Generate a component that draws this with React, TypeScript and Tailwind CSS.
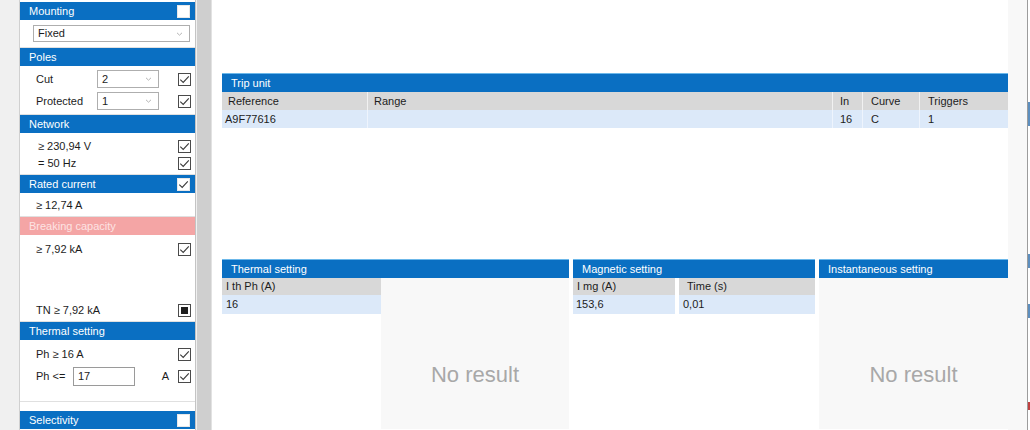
import React from "react"

type BoxState = "on" | "off" | "mixed"

function Box({ state, header = false }: { state: BoxState; header?: boolean }) {
  return (
    <span
      className={`flex h-[13px] w-[13px] shrink-0 items-center justify-center bg-white ${
        header ? "border border-[#e8e8e8]" : "border border-[#4a4a4a]"
      }`}
    >
      {state === "on" && (
        <svg width="11" height="11" viewBox="0 0 11 11">
          <path d="M1.3 5.6 4.2 8.4 9.8 2.3" fill="none" stroke="#3a3a3a" strokeWidth="1.1" />
        </svg>
      )}
      {state === "mixed" && <span className="h-[7px] w-[7px] bg-[#1e1e1e]" />}
    </span>
  )
}

function Head({ title, box, pink = false }: { title: string; box?: BoxState; pink?: boolean }) {
  return (
    <div
      className={`flex h-[18px] shrink-0 items-center justify-between pl-[9px] pr-[5px] ${
        pink ? "bg-[#f4a5a5] text-[#fde3e3]" : "bg-[#0a6fc2] text-white"
      }`}
    >
      <span>{title}</span>
      {box && <Box state={box} header />}
    </div>
  )
}

function Arrow() {
  return (
    <svg width="7" height="4" viewBox="0 0 7 4">
      <path d="M1 0.8 3.5 3.2 6 0.8" fill="none" stroke="#b5b5b5" strokeWidth="1" />
    </svg>
  )
}

function Select({ value, className = "" }: { value: string; className?: string }) {
  return (
    <div
      className={`flex h-[17px] items-center justify-between border border-[#aeaeae] bg-white pl-[4px] pr-[6px] ${className}`}
    >
      <span>{value}</span>
      <Arrow />
    </div>
  )
}

function Row({ label, box, className = "" }: { label: string; box: BoxState; className?: string }) {
  return (
    <div className={`flex h-[17px] items-center justify-between pl-[16px] pr-[4px] ${className}`}>
      <span>{label}</span>
      <Box state={box} />
    </div>
  )
}

function Sidebar() {
  return (
    <div className="flex w-[197px] shrink-0 bg-[#f0f0f0]">
      <div className="w-[20px] border-r border-[#d0d0d0]" />
      <div className="flex w-[176px] flex-col border-r border-[#c4c4c4] bg-white pt-[2px]">
        <Head title="Mounting" box="off" />
        <div className="h-[28px] border-b border-[#e0e0e0] pl-[13px] pr-[5px] pt-[5px]">
          <Select value="Fixed" />
        </div>

        <Head title="Poles" />
        <div className="flex h-[49px] flex-col gap-[4px] border-b border-[#e0e0e0] pt-[4px]">
          <div className="flex h-[18px] items-center pl-[16px] pr-[4px]">
            <span className="w-[61px]">Cut</span>
            <Select value="2" className="h-[18px] w-[62px]" />
            <span className="flex-1" />
            <Box state="on" />
          </div>
          <div className="flex h-[18px] items-center pl-[16px] pr-[4px]">
            <span className="w-[61px]">Protected</span>
            <Select value="1" className="h-[18px] w-[62px]" />
            <span className="flex-1" />
            <Box state="on" />
          </div>
        </div>

        <Head title="Network" />
        <div className="h-[42px] border-b border-[#e0e0e0] pt-[5px]">
          <Row label="≥ 230,94 V" box="on" className="pl-[18px]" />
          <Row label="= 50 Hz" box="on" className="pl-[18px]" />
        </div>

        <Head title="Rated current" box="on" />
        <div className="flex h-[24px] items-center border-b border-[#e0e0e0] pl-[16px] pt-[2px]">≥ 12,74 A</div>

        <Head title="Breaking capacity" pink />
        <div className="flex h-[87px] flex-col justify-between border-b border-[#e0e0e0] pb-[2px] pt-[6px]">
          <Row label="≥ 7,92 kA" box="on" />
          <Row label="TN ≥ 7,92 kA" box="mixed" />
        </div>

        <Head title="Thermal setting" />
        <div className="flex h-[62px] flex-col gap-[4px] border-b border-[#e0e0e0] pt-[6px]">
          <Row label="Ph ≥ 16 A" box="on" />
          <div className="flex h-[19px] items-center pl-[16px] pr-[4px]">
            <span className="w-[37px]">Ph &lt;=</span>
            <div className="flex h-[19px] w-[62px] items-center border border-[#9a9a9a] bg-white pl-[4px]">17</div>
            <span className="flex-1 pr-[9px] text-right">A</span>
            <Box state="on" />
          </div>
        </div>

        <div className="mt-[9px]">
          <Head title="Selectivity" box="off" />
        </div>
      </div>
    </div>
  )
}

function PanelHead({ title }: { title: string }) {
  return (
    <div className="flex h-[19px] items-center border-t border-[#6cb8ea] bg-[#0a6fc2] pl-[9px] text-white">{title}</div>
  )
}

function Cell({
  children,
  w,
  head = false,
  first = false,
  pl = "pl-[6px]",
}: {
  children?: React.ReactNode
  w: string
  head?: boolean
  first?: boolean
  pl?: string
}) {
  return (
    <div
      className={`flex h-[18px] items-center ${w} ${pl} ${
        first ? "" : head ? "border-l border-[#f1f1f1]" : "border-l border-[#eef4fd]"
      }`}
    >
      {children}
    </div>
  )
}

function NoResult() {
  return <div className="pt-[84px] text-center text-[22px] leading-[26px] text-[#a8a8a8]">No result</div>
}

function TripUnit() {
  const cols = [
    { h: "Reference", v: "A9F77616", w: "w-[145px]" },
    { h: "Range", v: "", w: "w-[465px]" },
    { h: "In", v: "16", w: "w-[30px]", pl: "pl-[7px]" },
    { h: "Curve", v: "C", w: "w-[57px]", pl: "pl-[8px]" },
    { h: "Triggers", v: "1", w: "flex-1", pl: "pl-[8px]" },
  ]
  return (
    <div className="flex flex-col">
      <PanelHead title="Trip unit" />
      <div className="flex bg-[#d8d8d8]">
        {cols.map((c, i) => (
          <Cell key={c.h} w={c.w} head first={i === 0} pl={c.pl}>
            {c.h}
          </Cell>
        ))}
      </div>
      <div className="flex bg-[#dce9f9]">
        {cols.map((c, i) => (
          <Cell key={c.h} w={c.w} first={i === 0} pl={i === 0 ? "pl-[3px]" : c.pl}>
            {c.v}
          </Cell>
        ))}
      </div>
    </div>
  )
}

function Settings() {
  return (
    <div className="flex h-[170px] gap-[4px]">
      <div className="flex w-[347px] flex-col">
        <PanelHead title="Thermal setting" />
        <div className="flex flex-1">
          <div className="w-[159px] bg-white">
            <div className="flex h-[17px] items-center bg-[#d8d8d8] pl-[4px]">I th Ph (A)</div>
            <div className="flex h-[19px] items-center bg-[#dce9f9] pl-[4px]">16</div>
          </div>
          <div className="flex-1 bg-[#f8f8f8]">
            <NoResult />
          </div>
        </div>
      </div>

      <div className="flex w-[242px] flex-col">
        <PanelHead title="Magnetic setting" />
        <div className="flex flex-1 gap-[4px] bg-white">
          <div className="w-[102px]">
            <div className="flex h-[17px] items-center bg-[#d8d8d8] pl-[4px]">I mg (A)</div>
            <div className="flex h-[19px] items-center bg-[#dce9f9] pl-[3px]">153,6</div>
          </div>
          <div className="flex-1">
            <div className="flex h-[17px] items-center bg-[#d8d8d8] pl-[8px]">Time (s)</div>
            <div className="flex h-[19px] items-center bg-[#dce9f9] pl-[4px]">0,01</div>
          </div>
        </div>
      </div>

      <div className="flex flex-1 flex-col">
        <PanelHead title="Instantaneous setting" />
        <div className="flex-1 bg-[#f8f8f8]">
          <NoResult />
        </div>
      </div>
    </div>
  )
}

export default function App() {
  return (
    <div className="flex h-[430px] w-[1030px] overflow-hidden bg-white text-[11px] leading-none text-[#1c1c1c] [font-family:'Liberation_Sans',Arial,sans-serif]">
      <Sidebar />
      <div className="w-[15px] shrink-0 border-r border-[#e2e2e2] bg-[#cfcfcf]" />
      <main className="flex flex-1 flex-col pl-[10px] pt-[73px]">
        <TripUnit />
        <div className="h-[131px]" />
        <Settings />
      </main>
      <div className="w-[19px] shrink-0 bg-[#f8f8f8]" />
      <div className="flex w-[3px] shrink-0 flex-col border-l border-[#9c9c9c]">
        <div className="mt-[102px] h-[24px] bg-[#5d8fbf]" />
        <div className="mt-[128px] h-[14px] bg-[#5d8fbf]" />
        <div className="mt-[36px] h-[14px] bg-[#5d8fbf]" />
        <div className="mt-[84px] h-[8px] bg-[#c04040]" />
      </div>
    </div>
  )
}
